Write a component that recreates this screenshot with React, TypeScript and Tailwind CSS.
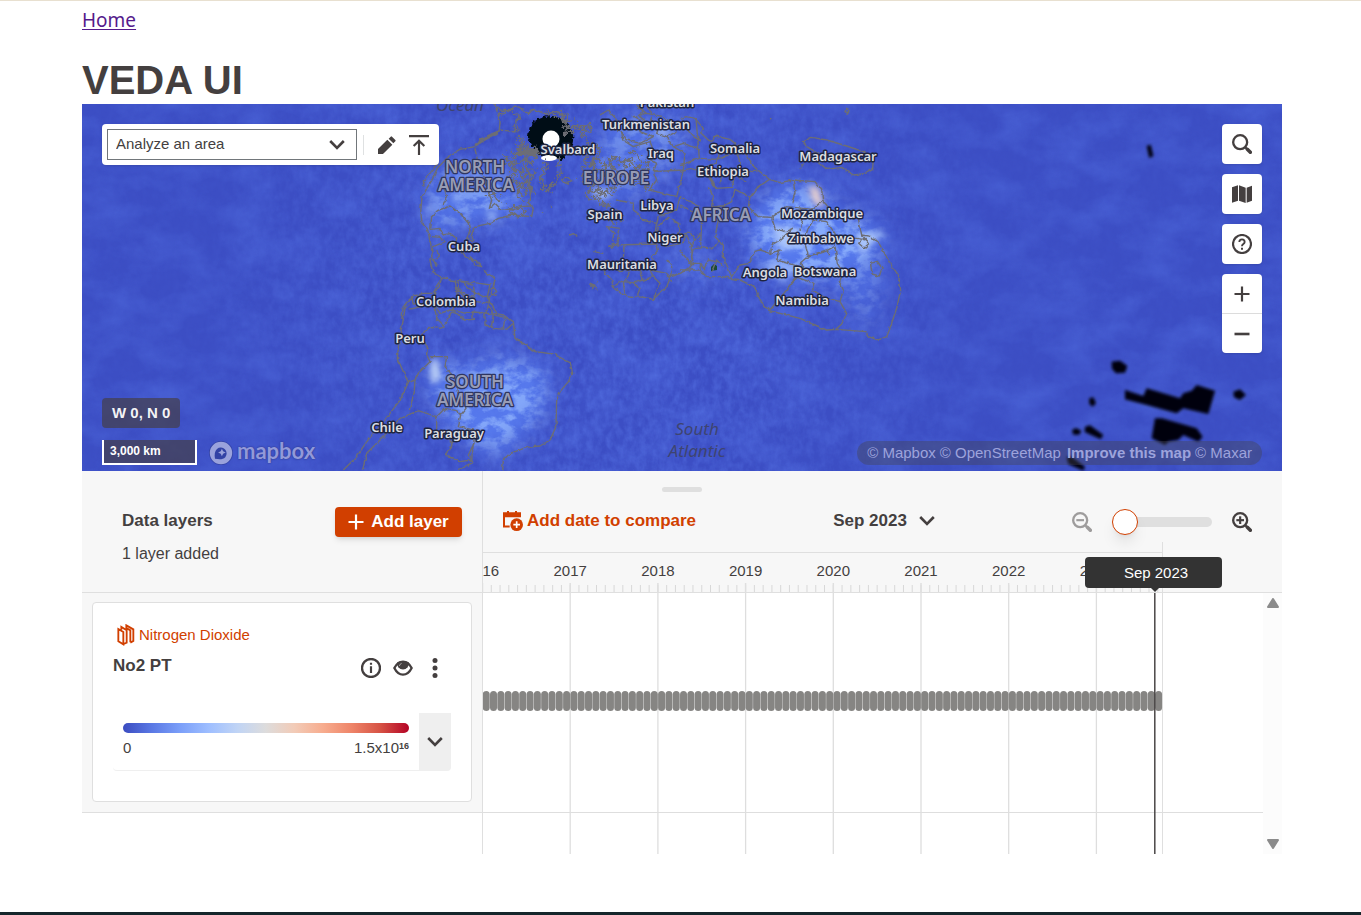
import React, { useState } from 'react';

type IconProps = { className?: string };

const ChevronDown = ({ className = 'h-[10px] w-4' }: IconProps) => (
  <svg viewBox="0 0 16 10" className={className} fill="none" stroke="currentColor" strokeWidth="2.6" aria-hidden="true">
    <path d="M1.2 1 8 7.800 14.800 1" />
  </svg>
);

const Pencil = () => (
  <svg viewBox="0 0 54 54" className="size-[18px]" fill="currentColor" aria-hidden="true">
    <path d="M0 54V39L28 11l15 15-28 28zM32 8l6-6q2-2 4 0l10 10q2 2 0 4l-6 6z" />
  </svg>
);

const Upload = () => (
  <svg viewBox="0 0 60 60" className="size-5" fill="none" stroke="currentColor" strokeWidth="6.500" aria-hidden="true">
    <path d="M0 3.250h60M30 60V17M14 33l16-16 16 16" />
  </svg>
);

const Magnifier = ({ sign }: { sign?: 'plus' | 'minus' }) => (
  <svg viewBox="0 0 60 60" className="size-5" fill="none" stroke="currentColor" aria-hidden="true">
    <circle cx="24.500" cy="24.500" r="21" strokeWidth="7" />
    <path d="m39 39 6 6" strokeWidth="7" />
    <path d="m46 46 9 9" strokeWidth="10.500" strokeLinecap="round" />
    {sign && <path d="M13 24.500h23" strokeWidth="6.500" />}
    {sign === 'plus' && <path d="M24.500 13v23" strokeWidth="6.500" />}
  </svg>
);

const MapIcon = () => (
  <svg viewBox="0 0 60 54" className="h-[18px] w-5" fill="currentColor" aria-hidden="true">
    <path d="M0 7 18 1v46L0 53zM21 1l20 7v46l-20-7zM44 8l16-6v45l-16 6z" />
  </svg>
);

const Help = () => (
  <svg viewBox="0 0 60 60" className="size-5" fill="none" stroke="currentColor" aria-hidden="true">
    <circle cx="30" cy="30" r="27" strokeWidth="6.500" />
    <path d="M22 24q0-8 8-8t8 8c0 6-8 6-8 12v1" strokeWidth="5.500" />
    <path d="M30 41v6" strokeWidth="6" />
  </svg>
);

const Info = () => (
  <svg viewBox="0 0 60 60" className="size-5" fill="none" stroke="currentColor" aria-hidden="true">
    <circle cx="30" cy="30" r="27" strokeWidth="7" />
    <path d="M30 14v6M30 25v20" strokeWidth="6.500" />
  </svg>
);

const Eye = () => (
  <svg viewBox="0 0 60 60" className="size-5" fill="none" stroke="currentColor" aria-hidden="true">
    <path d="M4 30Q14 11 30 11t26 19Q46 50 30 50T4 30z" strokeWidth="7" strokeLinejoin="round" />
    <path d="M13 13q17-8 34 0a17.500 17.500 0 1 1-34 0z" fill="currentColor" stroke="none" />
    <path d="M19 24q1-6 7-8" stroke="#fff" strokeWidth="2.500" opacity=".6" />
  </svg>
);

const Dots = () => (
  <svg viewBox="0 0 60 60" className="size-5" fill="currentColor" aria-hidden="true">
    <circle cx="30" cy="7.500" r="7.500" />
    <circle cx="30" cy="30" r="7.500" />
    <circle cx="30" cy="52.500" r="7.500" />
  </svg>
);

const Plus = ({ className = 'size-4' }: IconProps) => (
  <svg viewBox="0 0 16 16" className={className} fill="none" stroke="currentColor" strokeWidth="2.200" aria-hidden="true">
    <path d="M8 .5v15M.5 8h15" />
  </svg>
);

const Minus = () => (
  <svg viewBox="0 0 16 16" className="size-4" fill="none" stroke="currentColor" strokeWidth="2.600" aria-hidden="true">
    <path d="M.5 8h15" />
  </svg>
);

const CalendarPlus = () => (
  <svg viewBox="0 0 60 60" className="size-5" aria-hidden="true">
    <path d="M0 4h12V0h6v4h18V0h6v4h12v15H0z" fill="currentColor" />
    <path d="M3 15v31.500H20" fill="none" stroke="currentColor" strokeWidth="6" />
    <circle cx="41" cy="41" r="19" fill="currentColor" />
    <path d="M41 31v20M31 41h20" stroke="#fff" strokeWidth="5" />
  </svg>
);

const Folds = () => (
  <svg viewBox="0 0 52 66" className="h-[22px] w-[18px]" fill="none" stroke="currentColor" strokeWidth="5.500" aria-hidden="true">
    <path d="M3 15 18 24v37L3 52zM12 17V9l16 10v37l-9 4M27 14V4l21 12v35l-9 5M39 55V19L27 12" />
  </svg>
);

type Label = [string, number, number];

const places: Label[] = [
  ['Pakistan', 667, 107],
  ['Turkmenistan', 646, 129],
  ['Svalbard', 568, 154],
  ['Iraq', 661, 158],
  ['Spain', 605, 219],
  ['Libya', 657, 210],
  ['Niger', 665, 242],
  ['Mauritania', 622, 269],
  ['Cuba', 464, 251],
  ['Colombia', 446, 306],
  ['Peru', 410, 343],
  ['Chile', 387, 432],
  ['Paraguay', 454, 438],
  ['Somalia', 735, 153],
  ['Ethiopia', 723, 176],
  ['Madagascar', 838, 161],
  ['Mozambique', 822, 218],
  ['Zimbabwe', 821, 243],
  ['Angola', 765, 277],
  ['Botswana', 825, 276],
  ['Namibia', 802, 305],
];

const regions: Label[] = [
  ['NORTH', 475, 173],
  ['AMERICA', 476, 191],
  ['EUROPE', 616, 184],
  ['AFRICA', 721, 221],
  ['SOUTH', 475, 388],
  ['AMERICA', 475, 406],
];

const northBorders = [
  'M285 12 292 40 300 62 298 92 262 108 240 118 225 140 180 148 150 165 112 205 96 240 82 262 66 292 62 335 66 370 82 386 90 420 96 455 90 480 98 515 125 532 118 560 96 580',
  'M225 145 232 180 232 205 252 230 258 262 275 300 268 325 285 310 300 325 340 330 360 320 398 318',
  'M240 118 270 106 300 92M290 20 300 30 330 32 345 18 385 40 400 28 440 42 470 35 490 50',
  'M298 90 320 92 345 96 348 60 362 48M112 190 90 220 70 240 72 260M140 215 128 255 142 290 130 315',
  'M92 388 95 350 112 332 150 318 182 342 205 370 210 395 200 415 218 425 216 400 225 380 270 370 295 355 335 345 395 350 400 325 385 310 392 280 385 255 392 225 375 200 390 180',
  'M92 388 120 385 130 405 150 400 170 415 165 440M95 410 120 412 135 425 100 440 95 470 110 500M95 480 120 470 110 450',
  'M180 440 195 470 215 480 225 495 245 500 232 485 210 470M250 510 270 525 285 535 280 560 290 575 276 585',
  'M120 530 150 540 195 545 240 550 270 555 262 590 280 620 290 640M170 545 185 580 225 590 220 560M96 580 70 580 35 590 40 612 100 610 95 590',
  'M40 590 10 620 5 660M100 610 120 640 150 630 200 640 270 640 320 655',
  'M488 238 500 230 515 240 505 252 490 246zM510 405l10-4 12 8M568 552l14 6-6 10M588 548l4-8M425 340l8-2M450 318l6 4',
];

const arcticIslands = [
  'M432 178 438 205 425 225 428 262 440 280 450 262 470 240 482 215 476 190 478 172',
  'M330 150 345 170 335 190 350 210 340 240 360 260 352 285 370 300M345 130 370 135 385 160 375 185M300 185 330 195 345 215 322 235M310 170l40 20 30-10',
  'M380 130l10 20 20-10 10 22M370 190l12 20-8 30 16 20M345 262l20-10 12 20M338 340l-10-20 20 8 12-10 16 20-20 12z',
  'M350 110l20 15-10 25 25 10-15 20 30 10M340 200l30 10-10 20 30-5M335 235l20 20 30-10-10 40M260 290l20-10 10 20 20-14M385 180l20 30-14 30 8 40',
  'M440 35l20 12 20-10 25 10-5 22 25-12M495 60l5 25 20-5 18 12 25-20M485 40l8 40M360 45l-14 30 10 20M300 40l20-10 30 14',
];

const euroBorders = [
  'M485 45 500 75 495 100 520 95 525 75 545 80 570 70 572 95 545 92 560 120 570 150 555 175 550 215 572 240 568 265 590 285 620 275 640 285 648 262 670 255 655 230 690 220 700 250 740 255',
  'M575 130 600 150 590 180 560 190 590 205 640 200 620 175 650 170 660 185 700 178 690 200 720 205 735 225 700 240',
  'M552 280 575 300 600 290 595 315 625 310 640 335 630 365 655 370 665 350 648 330M556 250 540 230 555 210',
  'M570 150 585 170 575 200 595 230 580 250 610 265M595 185 620 195 610 225 640 240 650 215 630 200M650 180 675 195 668 220 690 235M600 240 625 250 640 270',
  'M690 155 715 165 725 190 745 180 740 215 720 240 745 250 735 275M700 190l20 18 20-8M560 270l20 10 14-14 10 22 20-8',
];

const asiaBorders = [
  'M600 45 625 30 650 60 640 85 665 95 680 120 720 130 760 110 720 95 730 65 700 50 740 40 712 20M740 40 790 50 820 80 850 75 880 110 900 120',
  'M665 95 668 120 700 140 750 125 760 150 745 175 770 190 760 215 850 210 855 160 820 140 800 110M820 140 850 130 900 150',
  'M710 15 730 30 720 50 745 70 760 45 740 20M750 60 780 75 770 100 800 110 830 95',
  'M760 215 770 240 748 270 830 290 850 210M648 300 700 310 700 330 720 345 725 360 770 370 775 350 830 330 840 290 900 320M770 370 765 400',
  'M620 380 660 385 650 430 635 445 642 400zM620 480 600 500 635 540 640 560 670 585 700 590 735 592 760 598 800 560 812 530 862 510 880 490 870 440 900 400',
  'M625 440 640 435 770 432 775 450 755 470 765 490 750 510 800 520 815 545M640 435 672 435 670 480 720 510 690 510 660 515 640 500 620 480M690 510 680 535 640 560M720 510 730 540 700 548 670 545 675 585M730 540 760 530 780 550 760 598M700 548 720 565 710 592M750 510 760 530',
  'M775 380 805 352 840 372 832 410 780 420 772 400zM832 410 860 405 875 440M780 420 800 440 845 430 860 405M580 455 610 460M800 480 815 500 812 530',
];

const africaBorders = [
  'M0 55 20 50 45 55 70 85 62 98 85 120 95 125 105 108 150 118 175 138 200 165 222 200 240 215 268 238 300 248 340 240 405 245 425 270 428 300 455 335 500 350 535 355 545 405 575 410 600 435 630 490 655 525 662 570 650 625 628 690 620 710 595 720 565 710 558 695 470 688 440 690 360 655 268 632 245 610 222 560 180 540 125 530 80 530 60 510 0 510',
  'M48 55 58 175 0 195M62 175 110 178 120 160 105 190 80 200M110 178 145 165 165 145 180 190 170 215 130 220 120 250M75 215 108 265 155 262 165 225 200 245M0 215 50 205 80 210 110 265M235 212 220 215 180 210',
  'M268 238 230 265 210 292 165 268 155 305 130 318 95 320 100 290 85 262M210 292 205 320 235 350 275 352 320 320 400 328M340 240 345 280 335 310M400 328 428 300M360 325 372 345 360 390',
  'M275 352 285 385 315 395 338 385 300 420 275 435 272 460 240 450 222 455 210 490 180 495 155 530 130 470 130 435 105 410 115 360 130 318M0 315 45 340 65 350 62 440 40 445 30 490 0 450M62 350 118 350M62 440 100 445 118 420M275 460 300 450 290 480 370 502 345 540 268 632M0 400 32 400 45 420M30 490 60 490 75 510',
  'M372 345 400 360 440 365 465 400 462 440 435 455 385 468 372 420 385 385 400 360M385 468 360 490 372 502M465 440 472 490 490 520 478 545 490 570 480 605 430 590 398 570 402 550 345 530M480 605 500 640 485 672 468 688M450 465 440 450 385 468M500 412 530 415 560 420 545 405M536 430l14-14 18 14-16 14zM572 490l20-6 14 20-8 24-22-6z',
  'M368 125 395 112 440 120 500 138 550 155 580 178 578 205 550 222 520 225 485 202 440 208 420 190 415 160 380 140zM495 35l4-10 8 4-4 10zM270 55l4 2M95 515 110 480 130 500M70 510 85 480 108 485M60 510 62 490M355 205l6-2M365 200l5-8',
];

const southBorders = [
  'M208 70 195 85 188 130 178 170 172 235 205 308 180 360 150 400 120 440 95 465 70 500 50 530 10 570M68 570 80 520 130 470 180 415 235 392 290 410M302 0 285 25 282 70 208 88M282 70 290 115 315 140 300 145 265 142 240 170 262 200 260 225 270 245 235 280 225 300 222 340 208 390M205 308 225 300',
  'M270 230 320 230 315 260 345 295 355 350 375 375 378 385 362 405 355 440 400 450 402 490 385 525 400 545 355 570M290 410 315 385 350 392 362 405M290 410 290 450 340 490 315 525 360 545 395 540 400 490',
  'M345 0 350 30 375 50 410 65 445 70 455 35 465 0M350 30 355 65 335 95 310 140M355 65 370 50M335 95 360 105 370 120 400 118 398 95 435 100 445 75 460 100 490 105 520 125 525 175 550 190 585 215 640 222 690 248 698 280 685 305 660 335 650 360 648 440 630 480 600 498 560 502 510 520 490 540 488 570M435 100 435 135 460 145 500 148 520 130M460 100 455 140M495 108 490 145M370 0 380 25 430 50 470 45M360 5 400 15M750 15l14 0 4 14',
];

const voids = [
  'M215 65 240 62 262 78 255 98 228 100 216 86z',
  'M255 150 310 168 320 145 420 175 430 160 455 152 470 135 525 152 505 222 430 205 410 220 320 195 255 178z',
  'M148 175 160 172 168 190 158 200 148 192z',
  'M96 270 108 264 124 272 118 284 100 284z',
  'M135 260 150 256 190 285 182 298 134 276z',
  'M345 235 365 235 470 265 488 290 475 305 430 285 415 300 385 305 375 315 335 295z',
  'M580 155 600 148 618 165 600 180 582 172z',
  'M80 350 95 350 135 380 130 392 85 372z',
];

const plumes: [string, number][] = [
  ['M425 185 450 165 505 168 525 205 500 222 450 225 430 235z', 0.8],
  ['M430 360 450 370 510 355 550 375 540 420 500 455 465 440 432 400z', 0.95],
  ['M600 130 640 110 690 120 680 160 640 195 595 205z', 0.6],
  ['M770 190 805 180 830 205 885 230 870 262 800 285 765 270 745 235z', 1],
  ['M820 270 880 250 880 320 860 325z', 0.5],
  ['M670 258 710 255 708 280 680 278z', 0.6],
];

const BaseMap = () => (
  <svg
    viewBox="82 104 1200 367"
    preserveAspectRatio="xMidYMid slice"
    className="absolute inset-0 h-full w-full"
    role="img"
    aria-label="Globe map of nitrogen dioxide"
  >
    <defs>
      <filter id="broad" x="0" y="0" width="100%" height="100%" colorInterpolationFilters="sRGB">
        <feTurbulence type="fractalNoise" baseFrequency="0.022 0.034" numOctaves="4" seed="7" />
        <feColorMatrix values="0 0 0 0 .32  0 0 0 0 .43  0 0 0 0 .88  2 0 0 0 -.75" />
      </filter>
      <filter id="fine" x="0" y="0" width="100%" height="100%" colorInterpolationFilters="sRGB">
        <feTurbulence type="fractalNoise" baseFrequency="0.15 0.11" numOctaves="3" seed="3" />
        <feColorMatrix values="0 0 0 0 .36  0 0 0 0 .48  0 0 0 0 .92  1.2 0 0 0 -.35" />
      </filter>
      <filter id="bright" x="0" y="0" width="100%" height="100%" colorInterpolationFilters="sRGB">
        <feTurbulence type="fractalNoise" baseFrequency="0.07 0.1" numOctaves="4" seed="12" />
        <feColorMatrix values="0 0 0 0 .58  0 0 0 0 .72  0 0 0 0 1  4 0 0 0 -1.6" />
      </filter>
      <filter id="soften" x="-40%" y="-40%" width="180%" height="180%">
        <feGaussianBlur stdDeviation="11" />
      </filter>
      <filter id="spot" x="-100%" y="-100%" width="300%" height="300%">
        <feGaussianBlur stdDeviation="3" />
      </filter>
      <filter id="edge" x="-20%" y="-20%" width="140%" height="140%">
        <feGaussianBlur stdDeviation="5.500" />
      </filter>
      <filter id="coast" x="-5%" y="-5%" width="110%" height="110%">
        <feTurbulence type="fractalNoise" baseFrequency="0.06" numOctaves="3" seed="5" result="noise" />
        <feDisplacementMap in="SourceGraphic" in2="noise" scale="10" xChannelSelector="R" yChannelSelector="A" />
      </filter>
      <filter id="arctic" x="-10%" y="-10%" width="120%" height="120%">
        <feTurbulence type="fractalNoise" baseFrequency="0.08" numOctaves="3" seed="9" result="noise" />
        <feDisplacementMap in="SourceGraphic" in2="noise" scale="36" xChannelSelector="R" yChannelSelector="A" />
      </filter>
      <filter id="ragged" x="-10%" y="-10%" width="120%" height="120%">
        <feTurbulence type="fractalNoise" baseFrequency="0.3" numOctaves="2" seed="9" result="noise" />
        <feDisplacementMap in="SourceGraphic" in2="noise" scale="6" xChannelSelector="R" yChannelSelector="A" />
        <feGaussianBlur stdDeviation=".5" />
      </filter>
      <radialGradient id="fade" cx="600" cy="290" r="400" gradientUnits="userSpaceOnUse">
        <stop offset=".4" stopColor="#fff" />
        <stop offset="1" stopColor="#fff" stopOpacity=".15" />
      </radialGradient>
      <mask id="disc">
        <rect x="82" y="104" width="1200" height="367" fill="url(#fade)" />
      </mask>
      <mask id="plume-area" maskUnits="userSpaceOnUse" x="82" y="104" width="1200" height="367">
        <g filter="url(#soften)" fill="#fff">
          {plumes.map(([d, opacity]) => (
            <path key={d} d={d} opacity={opacity} />
          ))}
        </g>
      </mask>
    </defs>

    <rect x="82" y="104" width="1200" height="367" fill="#3c4ec4" />
    <rect x="82" y="104" width="1200" height="367" filter="url(#broad)" opacity=".5" />
    <g mask="url(#disc)">
      <rect x="82" y="104" width="1200" height="367" filter="url(#fine)" opacity=".65" />
    </g>

    <g mask="url(#plume-area)">
      <rect x="82" y="104" width="1200" height="367" fill="#5a80f3" opacity=".85" />
      <rect x="82" y="104" width="1200" height="367" filter="url(#bright)" opacity=".8" />
    </g>
    <g filter="url(#spot)">
      <path d="M430 362 438 358 440 380 432 384z" fill="#bdd2f8" />
      <path d="M808 188 818 186 824 206 815 206z" fill="#e6d0d0" />
      <path d="M770 224 800 230 812 244 780 250zM855 235 885 232 870 246 860 256z" fill="#a9c4fb" />
      <path d="M770 262 795 270 785 280 768 274z" fill="#a6c1fb" opacity=".8" />
      <path d="M592 188 612 190 606 200 594 196zM654 126 668 130 664 138zM662 176 668 174 666 180z" fill="#a4bffa" />
      <path d="M425 205 432 210 428 216zM485 210 500 214 490 220zM452 192 462 198 455 203z" fill="#9bb9f9" />
    </g>

    <path
      d="M528 138Q528 116 553 116 569 118 573 134 575 144 567 152L562 160 541 156 534 150z"
      fill="#020a14"
      filter="url(#ragged)"
    />
    <path d="M545 161 557 161 556 190 547 192z" fill="#3b4cc3" />
    <ellipse cx="549" cy="158" rx="8" ry="3" fill="#fff" />
    <circle cx="551" cy="139" r="8.500" fill="#fff" />
    <path d="M711 267l3-3 3 2v4l-6 1z" fill="#1c4a35" />

    <g fill="none" stroke="#6c6d74" strokeWidth="4.200" strokeLinejoin="round">
      <g transform="translate(400 100) scale(.33333)">
        <g filter="url(#coast)">
          {northBorders.map((d) => (
            <path key={d} d={d} />
          ))}
          {asiaBorders.map((d) => (
            <path key={d} d={d} />
          ))}
        </g>
        <g filter="url(#arctic)" strokeWidth="5.500">
          {arcticIslands.map((d) => (
            <path key={d} d={d} />
          ))}
          {euroBorders.map((d) => (
            <path key={d} d={d} />
          ))}
          <path d="M350 150l30 10 30-10M345 160l50 0 20 12M365 145l30 22" strokeWidth="14" />
        </g>
        <path d="M222 138 255 117 292 98" strokeWidth="9" filter="url(#coast)" />
      </g>
      <g transform="translate(680 100) scale(.33333)" filter="url(#coast)">
        {africaBorders.map((d) => (
          <path key={d} d={d} />
        ))}
      </g>
      <g transform="translate(340 280) scale(.33333)" filter="url(#coast)">
        {southBorders.map((d) => (
          <path key={d} d={d} />
        ))}
      </g>
    </g>

    <g transform="translate(1040 340) scale(.33333)" fill="#01060a">
      <g filter="url(#edge)">
        {voids.map((d) => (
          <path key={d} d={d} />
        ))}
        <path d="M320-582 332-586 340-552 328-546z" />
      </g>
    </g>

    <g
      fontFamily='"Noto Sans", sans-serif'
      fontWeight="600"
      textAnchor="middle"
      strokeLinejoin="round"
      paintOrder="stroke"
    >
      <g fontSize="17" fontStyle="italic" fill="#3e4470" fontWeight="400">
        <text x="460" y="111">Ocean</text>
        <text x="697" y="435">South</text>
        <text x="697" y="457">Atlantic</text>
      </g>
      <g fontSize="17" fill="#989cb4" stroke="#2f3660" strokeWidth="2.500">
        {regions.map(([name, x, y]) => (
          <text key={`${name}-${y}`} x={x} y={y}>
            {name}
          </text>
        ))}
      </g>
      <g fontSize="13" fill="#dcdee2" stroke="#1f2540" strokeWidth="3">
        {places.map(([name, x, y]) => (
          <text key={name} x={x} y={y}>
            {name}
          </text>
        ))}
      </g>
    </g>
  </svg>
);

const mapButton = 'flex size-10 items-center justify-center rounded bg-white shadow-sm';

const MapPanel = () => (
  <section className="relative flex h-[367px] flex-col justify-between overflow-hidden bg-[#3b4cc3]">
    <BaseMap />
    <div className="relative flex items-start justify-between px-5 pt-5">
      <div className="flex h-[41px] items-center rounded bg-white pr-[10px] pl-[5px] shadow-sm">
        <div className="relative flex items-center">
          <select
            aria-label="Area of interest"
            className="h-[31px] w-[250px] appearance-none border border-[#71767a] bg-white pr-8 pl-2 text-[15px]"
          >
            <option>Analyze an area</option>
          </select>
          <ChevronDown className="pointer-events-none absolute right-3 h-[10px] w-4" />
        </div>
        <span className="ml-[6px] h-5 w-px bg-[#dfe1e2]" />
        <button aria-label="Draw an area" className="ml-[14px]">
          <Pencil />
        </button>
        <button aria-label="Upload an area" className="ml-[13px]">
          <Upload />
        </button>
      </div>
      <div className="flex flex-col gap-[10px]">
        <button aria-label="Search" className={mapButton}>
          <Magnifier />
        </button>
        <button aria-label="Map options" className={mapButton}>
          <MapIcon />
        </button>
        <button aria-label="Help" className={mapButton}>
          <Help />
        </button>
        <div className="flex w-10 flex-col rounded bg-white shadow-sm">
          <button aria-label="Zoom in" className="flex h-10 items-center justify-center border-b border-[#dcdcdc]">
            <Plus />
          </button>
          <button aria-label="Zoom out" className="flex h-[39px] items-center justify-center">
            <Minus />
          </button>
        </div>
      </div>
    </div>
    <div className="relative flex items-end justify-between px-5 pb-[6px]">
      <div className="flex flex-col items-start gap-3 text-white">
        <div className="rounded bg-[#443f49]/70 px-[10px] py-1 text-[15px] leading-[22px] font-bold text-white/95">
          W 0, N 0
        </div>
        <div className="flex items-end gap-3">
          <div className="h-[25px] w-[95px] border-2 border-t-0 border-white bg-[#443f49]/70 pl-[6px] text-xs leading-[22px] font-bold">
            3,000 km
          </div>
          <a href="#mapbox" aria-label="Mapbox" className="flex items-center gap-1">
            <svg viewBox="0 0 24 24" className="size-6" aria-hidden="true">
              <circle cx="12" cy="12" r="12" fill="#26307d" opacity=".45" />
              <path
                fill="#9aa2dc"
                fillRule="evenodd"
                d="M12 .8a11.200 11.200 0 1 0 0 22.400A11.200 11.200 0 0 0 12 .8zM6 17.700c-.8-4.300-.2-7.600 2-9.800a5.900 5.900 0 0 1 8.300 8.300c-2.200 2.200-5.500 2.400-10.300 1.500zM12.900 7.700 11.700 10.300 9.100 11.500l2.600 1.200 1.200 2.600 1.200-2.600 2.600-1.200-2.600-1.200z"
              />
            </svg>
            <span className="pb-1 font-[Lato,sans-serif] text-[22px] leading-5 font-bold text-[#9299d9] [text-shadow:0_0_2px_#26307d]">
              mapbox
            </span>
          </a>
        </div>
      </div>
      <div className="flex gap-1 rounded-full bg-[#44444f]/40 px-[10px] text-[15px] leading-6 text-[#9da3dc]">
        <a href="#tiles">© Mapbox</a>
        <a href="#osm">© OpenStreetMap</a>
        <a href="#improve" className="ml-[2px] font-bold">
          Improve this map
        </a>
        <a href="#maxar">© Maxar</a>
      </div>
    </div>
  </section>
);

const YEAR_WIDTH = 87.7;
const FIRST_YEAR_X = 87.2;
const END_X = 679.5;
const PLAYHEAD_X = 671.8;
const years = [2016, 2017, 2018, 2019, 2020, 2021, 2022, 2023];
const yearX = (year: number) => FIRST_YEAR_X + (year - 2017) * YEAR_WIDTH;
const ticks = Array.from({ length: 78 }, (_, i) => yearX(2016) + (i * YEAR_WIDTH) / 10).filter((x) => x > 1 && x < END_X);
const months = Array.from({ length: 93 }, (_, i) => yearX(2016) + (i * YEAR_WIDTH) / 12);

const TimeAxis = () => (
  <div className="relative h-10">
    <svg className="h-full w-full overflow-visible" role="img" aria-label="Years">
      <clipPath id="axis-area">
        <rect x="0" y="-20" width="700" height="60" />
      </clipPath>
      <g clipPath="url(#axis-area)">
        <path d={`M0 .5H${END_X}M${END_X}-10V40`} stroke="#dfdfdf" fill="none" />
        {ticks.map((x) => (
          <path key={x} d={`M${x} 33V40`} stroke="#d8d8d8" />
        ))}
        {years.map((year) => (
          <g key={year}>
            <path d={`M${yearX(year)} 31V40`} stroke="#dfdfdf" strokeWidth="1.500" />
            <text x={yearX(year)} y="24" textAnchor="middle" fontSize="15" fill="#443f3f">
              {year}
            </text>
          </g>
        ))}
      </g>
    </svg>
    <div className="absolute top-[5px] left-[602px] z-10 w-[137px] rounded bg-[#333] pl-[5px] text-center text-[15px] leading-[31px] text-white">
      Sep 2023
      <svg viewBox="0 0 8 4" className="absolute top-full left-[66px] h-1 w-2" aria-hidden="true">
        <path d="M0 0h8L4 4z" fill="#333" />
      </svg>
    </div>
  </div>
);

const TimeGrid = () => (
  <svg className="h-full min-w-0 flex-1" role="img" aria-label="Available months for No2 PT">
    {years.slice(1).map((year) => (
      <path key={year} d={`M${yearX(year)} 0V261`} stroke="#dedede" strokeWidth="1.300" />
    ))}
    <path d={`M${END_X} 0V261`} stroke="#dfdfdf" />
    <rect y="219" width="100%" height="1" fill="#dedede" />
    {months.map((x) => (
      <rect key={x} x={x + 0.2} y="98" width="7" height="20" rx="3.500" fill="#868583" />
    ))}
    <path d={`M${PLAYHEAD_X} 0V261`} stroke="#4a4747" strokeWidth="1.500" />
  </svg>
);

const LayerCard = () => (
  <article className="h-[200px] rounded border border-[#dfdfdf] bg-white px-5 pt-[21px]">
    <p className="flex h-[22px] items-center gap-1 pl-1 text-[15px] text-[#d13f00]">
      <Folds />
      Nitrogen Dioxide
    </p>
    <div className="mt-2 flex h-6 items-center justify-between">
      <h3 className="text-[17px] leading-5 font-bold">No2 PT</h3>
      <div className="flex gap-3 pt-1 pr-[6px]">
        <button aria-label="Layer info">
          <Info />
        </button>
        <button aria-label="Hide layer">
          <Eye />
        </button>
        <button aria-label="More options">
          <Dots />
        </button>
      </div>
    </div>
    <div className="mt-[35px] flex h-[58px]">
      <div className="min-w-0 flex-1 rounded-bl border-b border-[#efefef] px-[10px] pt-[10px]">
        <div className="h-[10px] rounded-full bg-[linear-gradient(90deg,#3b4cc0,#5a78e4,#7b9ff9,#9ebeff,#c0d4f5,#dddcdc,#f2cbb7,#f7ac8e,#ee8468,#d65244,#b40426)]" />
        <div className="mt-1 flex justify-between text-[15px] leading-[22px]">
          <span>0</span>
          <span>
            1.5x10<sup className="-top-1 text-[9px] font-bold">16</sup>
          </span>
        </div>
      </div>
      <button aria-label="Expand legend" className="flex w-8 items-center justify-center rounded-br bg-[#efefef]">
        <ChevronDown />
      </button>
    </div>
  </article>
);

const TimelinePanel = () => {
  const [zoom, setZoom] = useState(0);
  return (
    <section className="relative flex">
      <span className="absolute top-4 left-1/2 h-[5px] w-10 -translate-x-1/2 rounded-full bg-[#dfdfdf]" />
      <div className="w-[401px] shrink-0 border-r border-[#dfdfdf]">
        <header className="flex h-[122px] items-start justify-between border-b border-[#dfdfdf] bg-[#f7f7f7] pt-9 pr-5 pl-10">
          <div>
            <h2 className="text-[17px] leading-7 font-bold">Data layers</h2>
            <p className="mt-[5px] text-base leading-7">1 layer added</p>
          </div>
          <button className="flex h-[30px] w-[127px] items-center justify-center gap-[7px] rounded bg-[#d13f00] text-[17px] font-bold text-white shadow-md">
            <Plus />
            Add layer
          </button>
        </header>
        <div className="h-[220px] border-b border-[#dfdfdf] bg-[#f7f7f7] px-[10px] pt-[9px]">
          <LayerCard />
        </div>
      </div>
      <div className="flex min-w-0 flex-1 flex-col">
        <header className="h-[122px] border-b border-[#dfdfdf] bg-[#f7f7f7]">
          <div className="flex h-[81px] items-start justify-between pt-9 pr-[30px] pl-5">
            <button className="flex h-7 items-center gap-1 text-[17px] font-bold text-[#d13f00]">
              <CalendarPlus />
              Add date to compare
            </button>
            <button className="flex h-7 items-center gap-3 text-[17px] font-bold">
              Sep 2023
              <ChevronDown />
            </button>
            <div className="flex h-[30px] items-center gap-5">
              <button aria-label="Zoom timeline out" className="text-[#9e9c9c]">
                <Magnifier sign="minus" />
              </button>
              <input
                type="range"
                aria-label="Timeline zoom"
                min="0"
                max="100"
                value={zoom}
                onChange={(e) => setZoom(Number(e.target.value))}
                className="h-[10px] w-[100px] appearance-none rounded-full bg-[#dfdfdf] [&::-webkit-slider-thumb]:size-[26px] [&::-webkit-slider-thumb]:appearance-none [&::-webkit-slider-thumb]:rounded-full [&::-webkit-slider-thumb]:border [&::-webkit-slider-thumb]:border-[#d13f00] [&::-webkit-slider-thumb]:bg-white [&::-webkit-slider-thumb]:shadow-lg"
              />
              <button aria-label="Zoom timeline in">
                <Magnifier sign="plus" />
              </button>
            </div>
          </div>
          <TimeAxis />
        </header>
        <div className="flex h-[261px]">
          <TimeGrid />
          <div className="flex w-[19px] flex-col items-center justify-between bg-[#fcfcfc] py-[5px] text-[#8b8b8b]">
            <svg viewBox="0 0 12 10" className="h-[10px] w-3" aria-hidden="true">
              <path d="M6 1 11 9H1z" fill="currentColor" stroke="currentColor" strokeWidth="2" strokeLinejoin="round" />
            </svg>
            <svg viewBox="0 0 12 10" className="h-[10px] w-3" aria-hidden="true">
              <path d="M6 9 11 1H1z" fill="currentColor" stroke="currentColor" strokeWidth="2" strokeLinejoin="round" />
            </svg>
          </div>
        </div>
      </div>
    </section>
  );
};

export default function App() {
  return (
    <div className="flex min-h-screen flex-col border-t border-[#e8e0d0] bg-white font-['Liberation_Sans',Arial,sans-serif] text-[#443f3f]">
      <main className="mr-[79px] ml-[82px] pt-[3px]">
        <nav className="font-['Noto_Sans',sans-serif] text-[19px] leading-8">
          <a href="#home" className="text-[#551a8b] underline underline-offset-2">
            Home
          </a>
        </nav>
        <h1 className="mt-5 text-[40px] leading-[48px] font-bold">VEDA UI</h1>
        <MapPanel />
        <TimelinePanel />
      </main>
      <footer className="mt-auto h-[3px] bg-[#16262b]" />
    </div>
  );
}
